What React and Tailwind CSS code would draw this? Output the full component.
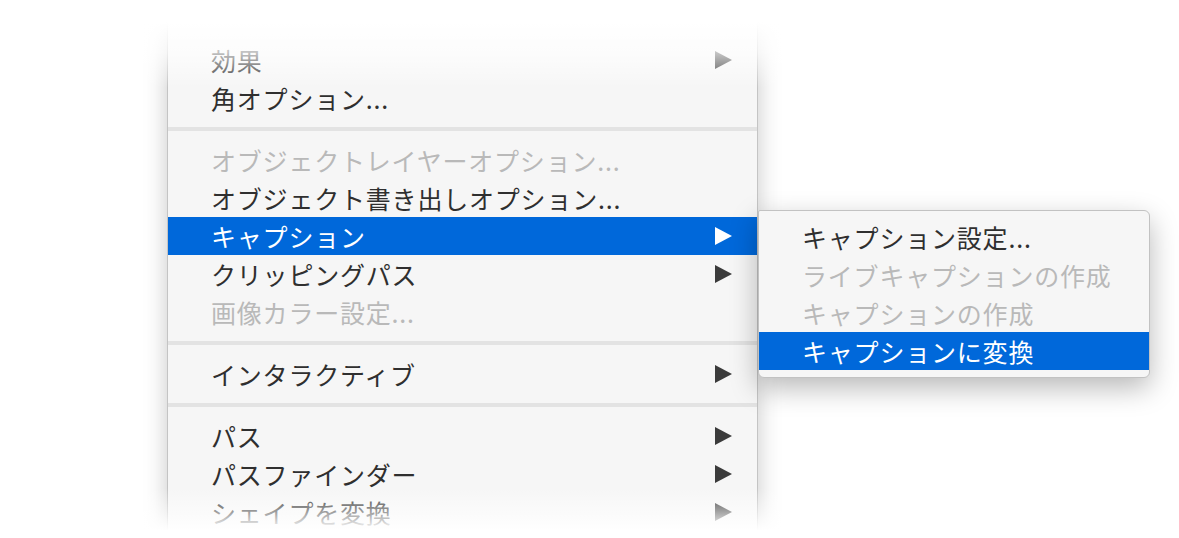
const Arrow = ({ color }) => (
  <svg width="17" height="18" viewBox="0 0 17 18" className="shrink-0">
    <polygon points="0,0 17,9 0,18" fill={color} />
  </svg>
);

const Row = ({ label, arrow, disabled, active }) => {
  const text = active ? "text-white" : disabled ? "text-[#b9b9b9]" : "text-[#2f2f2f]";
  return (
    <div
      className={`flex h-[38px] items-center justify-between pl-[43px] pr-[25px] ${active ? "bg-[#0068da]" : ""}`}
    >
      <span className={`text-[25px] leading-[37px] tracking-[0.8px] whitespace-nowrap ${text}`}>{label}</span>
      {arrow && <Arrow color={active ? "#ffffff" : disabled ? "#b9b9b9" : "#3b3b3b"} />}
    </div>
  );
};

const Separator = () => <div className="my-[10px] h-[4px] bg-[#e3e3e3]" />;

export default function App() {
  return (
    <div
      className="relative h-[538px] w-[1179px] overflow-hidden bg-white"
      style={{ fontFamily: '"Noto Sans CJK JP", "Noto Sans", sans-serif' }}
    >
      <div className="flex items-start">
        {/* Main context menu */}
        <div className="ml-[167px] w-[591px] border-x border-[#c4c4c4] bg-[#f6f6f6] pt-[41px] pb-[40px] shadow-[0_0_22px_rgba(0,0,0,0.22)]">
          <Row label="効果" arrow />
          <Row label="角オプション..." />
          <Separator />
          <Row label="オブジェクトレイヤーオプション..." disabled />
          <Row label="オブジェクト書き出しオプション..." />
          <Row label="キャプション" arrow active />
          <Row label="クリッピングパス" arrow />
          <Row label="画像カラー設定..." disabled />
          <Separator />
          <Row label="インタラクティブ" arrow />
          <Separator />
          <Row label="パス" arrow />
          <Row label="パスファインダー" arrow />
          <Row label="シェイプを変換" arrow />
        </div>

        {/* Submenu */}
        <div className="relative z-10 mt-[210px] w-[392px] rounded-r-[6px] rounded-bl-[6px] rounded-tl-[2px] border border-[#c2c2c2] bg-[#f6f6f6] py-[7px] shadow-[0_10px_28px_rgba(0,0,0,0.28)]">
          <Row label="キャプション設定..." />
          <Row label="ライブキャプションの作成" disabled />
          <Row label="キャプションの作成" disabled />
          <Row label="キャプションに変換" active />
        </div>
      </div>

      {/* top and bottom fades */}
      <div className="pointer-events-none absolute inset-x-0 top-0 z-20 h-[88px] bg-linear-to-b from-white from-25% via-white/70 via-60% to-white/0" />
      <div className="pointer-events-none absolute inset-x-0 bottom-0 z-20 h-[50px] bg-linear-to-t from-white from-15% via-white/50 via-55% to-white/0" />
    </div>
  );
}
